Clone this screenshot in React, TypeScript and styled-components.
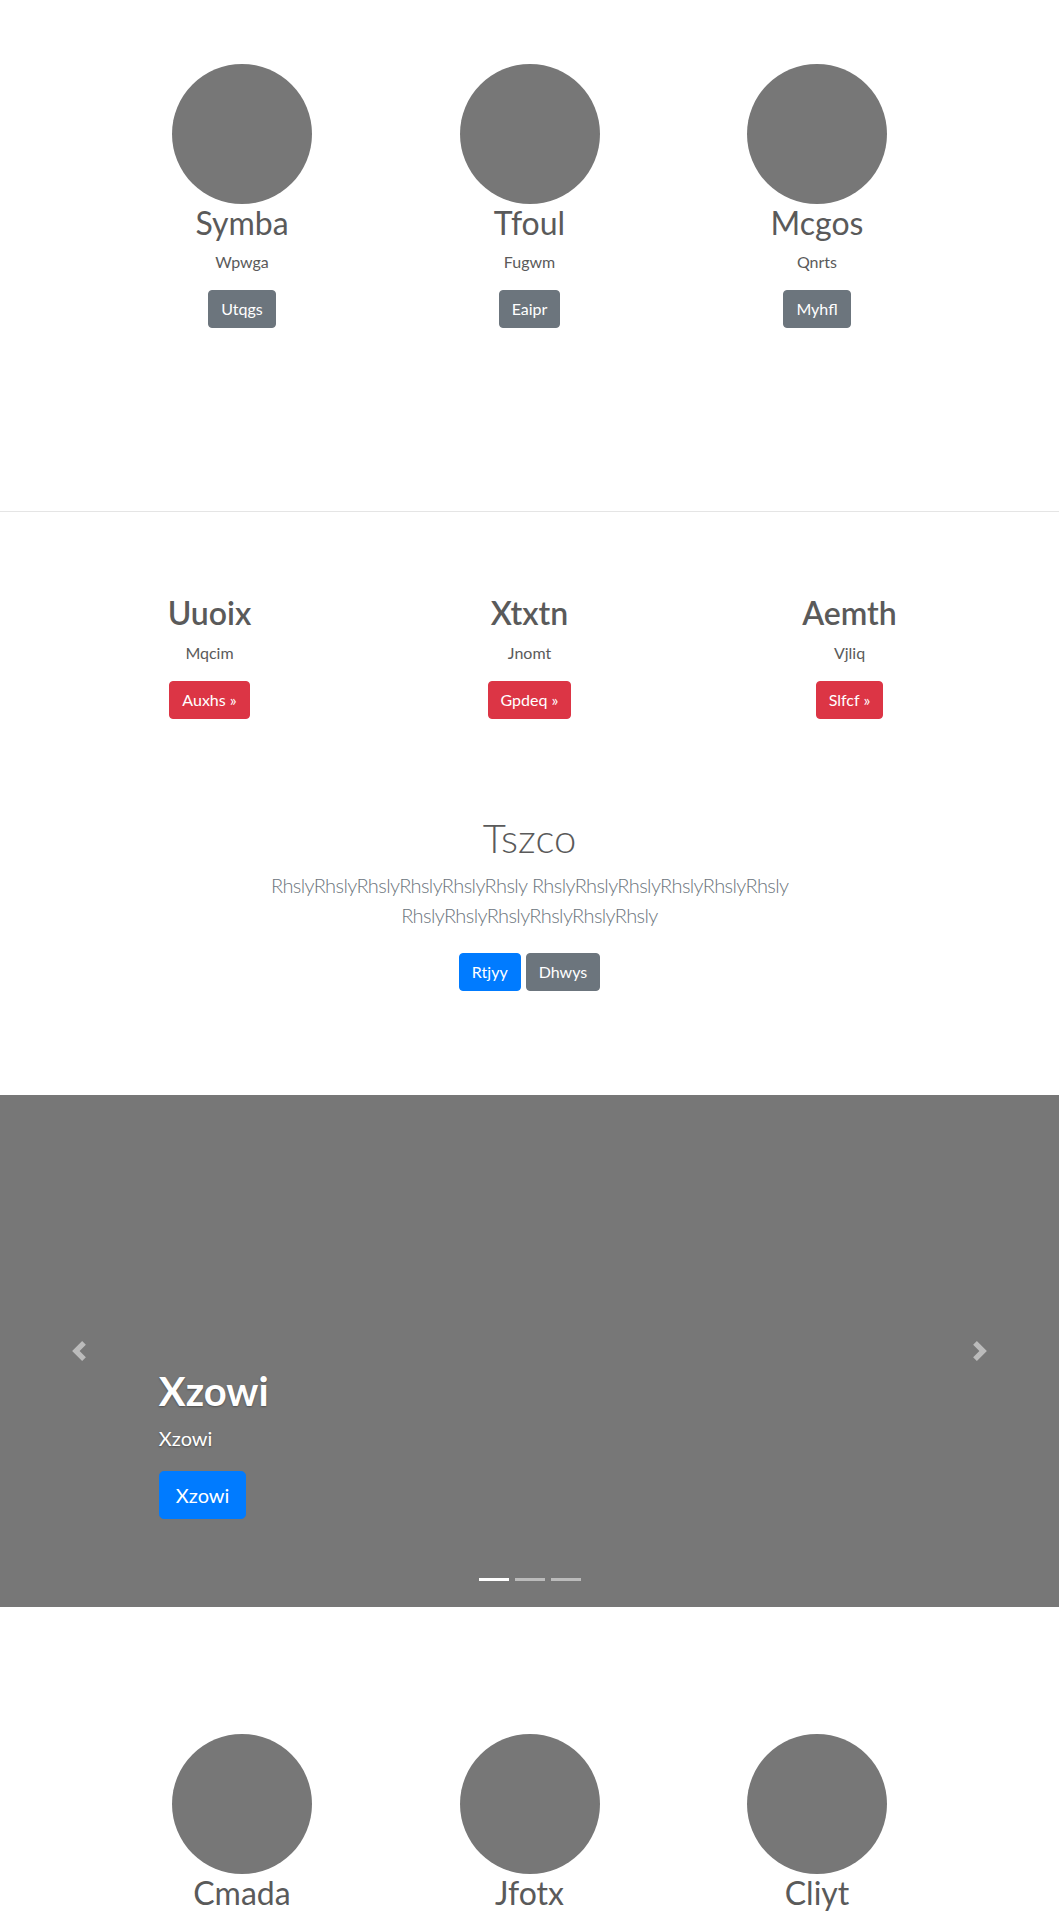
import React from "react";
import styled, { createGlobalStyle, css } from "styled-components";

const GlobalStyle = createGlobalStyle`
  * { box-sizing: border-box; }
  html, body { margin: 0; padding: 0; }
  body {
    font-family: Lato, "Open Sans", "Noto Sans", sans-serif;
    font-size: 16px;
    line-height: 1.5;
    color: #5a5a5a;
    background: #fff;
  }
`;

type Variant = "primary" | "secondary" | "danger";

const variantColors: Record<Variant, string> = {
  primary: "#007bff",
  secondary: "#6c757d",
  danger: "#dc3545",
};

const Button = styled.a<{ $variant: Variant; $large?: boolean }>`
  display: inline-block;
  font-family: inherit;
  font-weight: 400;
  color: #fff;
  text-decoration: none;
  text-align: center;
  white-space: nowrap;
  background-color: ${(p) => variantColors[p.$variant]};
  border: 1px solid ${(p) => variantColors[p.$variant]};
  ${(p) =>
    p.$large
      ? css`
          padding: 8px 16px;
          font-size: 20px;
          line-height: 30px;
          border-radius: 4.8px;
        `
      : css`
          padding: 6px 12px;
          font-size: 16px;
          line-height: 24px;
          border-radius: 4px;
        `}
`;

/* ---------- marketing rows with circles ---------- */

const MarketingSection = styled.section<{ $top: number; $bottom: number }>`
  padding-top: ${(p) => p.$top}px;
  padding-bottom: ${(p) => p.$bottom}px;
`;

const CircleGrid = styled.div`
  display: grid;
  grid-template-columns: repeat(3, 287.5px);
  justify-content: center;
`;

const Feature = styled.div`
  display: flex;
  flex-direction: column;
  align-items: center;
  text-align: center;
`;

const Avatar = styled.div`
  width: 140px;
  height: 140px;
  border-radius: 50%;
  background: #777;
`;

const FeatureTitle = styled.h2<{ $bold?: boolean }>`
  margin: 0 0 8px;
  font-size: 32px;
  line-height: 38.4px;
  font-weight: ${(p) => (p.$bold ? 600 : 400)};
  color: #5a5a5a;
`;

const FeatureText = styled.p`
  margin: 0 0 16px;
  font-size: 16px;
  line-height: 24px;
`;

const Divider = styled.hr`
  margin: 0;
  border: 0;
  border-top: 1px solid #e5e5e5;
`;

const HighlightGrid = styled.div`
  display: grid;
  grid-template-columns: repeat(3, 320px);
  justify-content: center;
`;

/* ---------- jumbotron ---------- */

const Jumbotron = styled.section`
  padding: 95px 15px 104px;
  text-align: center;
`;

const JumboInner = styled.div`
  max-width: 640px;
  margin: 0 auto;
  padding: 0 15px;
`;

const JumboTitle = styled.h1`
  margin: 0 0 8px;
  font-size: 40px;
  line-height: 48px;
  font-weight: 300;
  color: #5a5a5a;
`;

const Lead = styled.p`
  margin: 0;
  font-size: 20px;
  line-height: 30px;
  font-weight: 300;
  letter-spacing: -0.6px;
  color: #6c757d;
`;

const ButtonRow = styled.div`
  display: flex;
  justify-content: center;
  gap: 5px;
  padding-top: 23px;
`;

/* ---------- carousel ---------- */

const Carousel = styled.section`
  position: relative;
  height: 512px;
  background: #777;
  overflow: hidden;
`;

const Caption = styled.div`
  position: absolute;
  left: 15%;
  right: 15%;
  bottom: 48px;
  padding: 20px 0;
  color: #fff;
  text-align: left;
  text-shadow: 0 1px 2px rgba(0, 0, 0, 0.35);
`;

const CaptionTitle = styled.h1`
  margin: 0 0 8px;
  font-size: 40px;
  line-height: 48px;
  font-weight: 700;
`;

const CaptionText = styled.p`
  margin: 0 0 18px;
  font-size: 20px;
  line-height: 30px;
`;

const CaptionAction = styled.div`
  margin-bottom: 20px;
  text-shadow: none;
`;

const Control = styled.a<{ $side: "left" | "right" }>`
  position: absolute;
  top: 0;
  bottom: 0;
  ${(p) => (p.$side === "left" ? "left: 0;" : "right: 0;")}
  width: 15%;
  display: flex;
  align-items: center;
  justify-content: center;
  opacity: 0.5;
`;

const Indicators = styled.ol`
  position: absolute;
  left: 15%;
  right: 15%;
  bottom: 16px;
  margin: 0;
  padding: 0;
  list-style: none;
  display: flex;
  justify-content: center;
`;

const Indicator = styled.li<{ $active?: boolean }>`
  box-sizing: content-box;
  width: 30px;
  height: 3px;
  margin: 0 3px;
  border-top: 10px solid transparent;
  border-bottom: 10px solid transparent;
  background-clip: padding-box;
  background-color: ${(p) => (p.$active ? "#fff" : "rgba(255,255,255,0.5)")};
`;

const Chevron = ({ dir }: { dir: "prev" | "next" }) => (
  <svg width="20" height="20" viewBox="0 0 8 8" fill="#fff" aria-hidden="true">
    {dir === "prev" ? (
      <path d="M5.25 0l-4 4 4 4 1.5-1.5-2.5-2.5 2.5-2.5-1.5-1.5z" />
    ) : (
      <path d="M2.75 0l-1.5 1.5 2.5 2.5-2.5 2.5 1.5 1.5 4-4-4-4z" />
    )}
  </svg>
);

const topFeatures = [
  { title: "Symba", text: "Wpwga", action: "Utqgs" },
  { title: "Tfoul", text: "Fugwm", action: "Eaipr" },
  { title: "Mcgos", text: "Qnrts", action: "Myhfl" },
];

const highlights = [
  { title: "Uuoix", text: "Mqcim", action: "Auxhs »" },
  { title: "Xtxtn", text: "Jnomt", action: "Gpdeq »" },
  { title: "Aemth", text: "Vjliq", action: "Slfcf »" },
];

const bottomFeatures = [
  { title: "Cmada", text: "Wpwga", action: "Utqgs" },
  { title: "Jfotx", text: "Fugwm", action: "Eaipr" },
  { title: "Cliyt", text: "Qnrts", action: "Myhfl" },
];

const word = "RhslyRhslyRhslyRhslyRhslyRhsly";

export default function App() {
  return (
    <>
      <GlobalStyle />
      <MarketingSection $top={64} $bottom={183}>
        <CircleGrid>
          {topFeatures.map((f) => (
            <Feature key={f.title}>
              <Avatar />
              <FeatureTitle>{f.title}</FeatureTitle>
              <FeatureText>{f.text}</FeatureText>
              <Button href="#" $variant="secondary">
                {f.action}
              </Button>
            </Feature>
          ))}
        </CircleGrid>
      </MarketingSection>

      <Divider />

      <MarketingSection $top={82} $bottom={0}>
        <HighlightGrid>
          {highlights.map((h) => (
            <Feature key={h.title}>
              <FeatureTitle $bold>{h.title}</FeatureTitle>
              <FeatureText>{h.text}</FeatureText>
              <Button href="#" $variant="danger">
                {h.action}
              </Button>
            </Feature>
          ))}
        </HighlightGrid>
      </MarketingSection>

      <Jumbotron>
        <JumboInner>
          <JumboTitle>Tszco</JumboTitle>
          <Lead>
            {word} {word} {word}
          </Lead>
          <ButtonRow>
            <Button href="#" $variant="primary">
              Rtjyy
            </Button>
            <Button href="#" $variant="secondary">
              Dhwys
            </Button>
          </ButtonRow>
        </JumboInner>
      </Jumbotron>

      <Carousel>
        <Indicators>
          <Indicator $active />
          <Indicator />
          <Indicator />
        </Indicators>
        <Caption>
          <CaptionTitle>Xzowi</CaptionTitle>
          <CaptionText>Xzowi</CaptionText>
          <CaptionAction>
            <Button href="#" $variant="primary" $large>
              Xzowi
            </Button>
          </CaptionAction>
        </Caption>
        <Control href="#" $side="left" aria-label="Previous">
          <Chevron dir="prev" />
        </Control>
        <Control href="#" $side="right" aria-label="Next">
          <Chevron dir="next" />
        </Control>
      </Carousel>

      <MarketingSection $top={127} $bottom={40}>
        <CircleGrid>
          {bottomFeatures.map((f) => (
            <Feature key={f.title}>
              <Avatar />
              <FeatureTitle>{f.title}</FeatureTitle>
              <FeatureText>{f.text}</FeatureText>
              <Button href="#" $variant="secondary">
                {f.action}
              </Button>
            </Feature>
          ))}
        </CircleGrid>
      </MarketingSection>
    </>
  );
}
